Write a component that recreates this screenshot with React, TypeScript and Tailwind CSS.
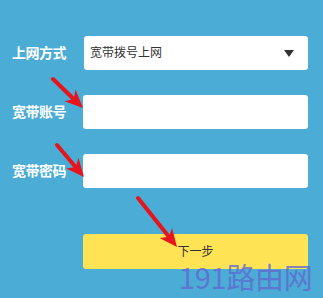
import React from 'react';

const FONT = "font-['Liberation_Sans','Noto_Sans_CJK_SC',sans-serif]";

// red annotation arrow, drawn from tail to tip
const Arrow = ({ x1, y1, x2, y2 }: { x1: number; y1: number; x2: number; y2: number }) => {
  const dx = x2 - x1;
  const dy = y2 - y1;
  const len = Math.hypot(dx, dy);
  const ux = dx / len;
  const uy = dy / len;
  const px = -uy;
  const py = ux;
  const head = 18;
  const half = 8;
  const bx = x2 - ux * head;
  const by = y2 - uy * head;
  const nx = x2 - ux * (head - 5);
  const ny = y2 - uy * (head - 5);
  const pts = `${x2},${y2} ${bx + px * half},${by + py * half} ${nx},${ny} ${bx - px * half},${by - py * half}`;
  return (
    <g>
      <line x1={x1} y1={y1} x2={nx} y2={ny} stroke="#e8141c" strokeWidth={4} strokeLinecap="round" />
      <polygon points={pts} fill="#e8141c" />
    </g>
  );
};

const Row = ({ label, children }: { label: string; children: React.ReactNode }) => (
  <div className="flex items-center h-[34px]">
    <div className="w-[83px] shrink-0 pl-3 text-[14px] font-bold text-white tracking-[-0.5px]">{label}</div>
    {children}
  </div>
);

export default function App() {
  return (
    <div className={`relative w-[323px] h-[298px] overflow-hidden bg-[#4bacd6] ${FONT}`}>
      <div className="flex flex-col pt-[36px]">
        <Row label="上网方式">
          <div className="ml-[1px] w-[224px] h-[34px] bg-white rounded-[3px] flex items-center justify-between pl-[6px] pr-[14px] text-[12px] text-[#333]">
            <span>宽带拨号上网</span>
            <svg width="10" height="7" viewBox="0 0 10 7">
              <polygon points="0,0 10,0 5,7" fill="#333" />
            </svg>
          </div>
        </Row>
        <div className="mt-[25px]">
          <Row label="宽带账号">
            <div className="w-[225px] h-[34px] bg-white rounded-[3px]" />
          </Row>
        </div>
        <div className="mt-[25px]">
          <Row label="宽带密码">
            <div className="w-[225px] h-[34px] bg-white rounded-[3px]" />
          </Row>
        </div>
        <div className="mt-[46px] ml-[83px] w-[225px] h-[35px] bg-[#fee455] rounded-[3px] flex items-center justify-center text-[12px] text-[#333]">
          下一步
        </div>
      </div>

      <div className="absolute left-[179px] top-[262px] text-[29px] leading-none text-[#6268d0]/80 font-['Noto_Sans_CJK_SC',sans-serif] tracking-[-0.3px]">
        191路由网
      </div>

      <svg className="absolute inset-0" width="323" height="298">
        <Arrow x1={53} y1={79} x2={83} y2={108} />
        <Arrow x1={57} y1={145} x2={84} y2={177} />
        <Arrow x1={138} y1={198} x2={177} y2={247} />
      </svg>
    </div>
  );
}
